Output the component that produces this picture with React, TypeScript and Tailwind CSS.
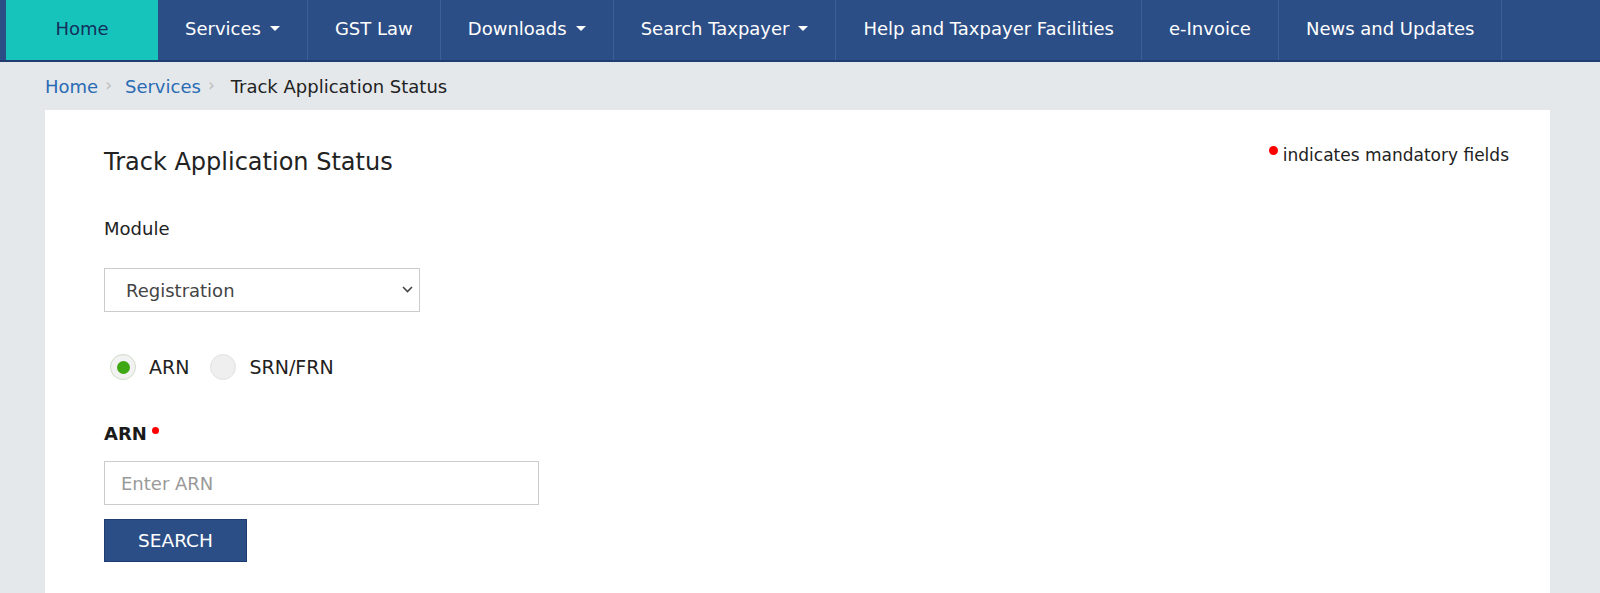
import { useState } from "react";

const navItems = [
  { label: "Services", caret: true },
  { label: "GST Law", caret: false },
  { label: "Downloads", caret: true },
  { label: "Search Taxpayer", caret: true },
  { label: "Help and Taxpayer Facilities", caret: false },
  { label: "e-Invoice", caret: false },
  { label: "News and Updates", caret: false },
];

function Caret() {
  return (
    <span className="ml-[9px] inline-block h-0 w-0 border-x-[5px] border-t-[5px] border-x-transparent border-t-white" />
  );
}

function Radio({ checked, label, onClick }: { checked: boolean; label: string; onClick: () => void }) {
  return (
    <label className="flex cursor-pointer items-center" onClick={onClick}>
      <span
        className={`flex h-[26px] w-[26px] items-center justify-center rounded-full border ${
          checked ? "border-[#cfdcc8] bg-[#f2f2f2]" : "border-[#e2e2e2] bg-[#efefef]"
        }`}
      >
        {checked && <span className="h-[13px] w-[13px] rounded-full bg-[#3fa713]" />}
      </span>
      <span className="ml-[13px] text-[19px] leading-[26px] text-[#222]">{label}</span>
    </label>
  );
}

export default function App() {
  const [mode, setMode] = useState<"arn" | "srn">("arn");

  return (
    <div className="min-h-[593px] bg-[#e4e8eb] font-['DejaVu_Sans',sans-serif] text-[#222]">
      <nav className="flex h-[62px] border-b-2 border-[#1f3d70] bg-[#2c4e86] pl-[6px]">
        <a className="flex w-[152px] items-center justify-center bg-[#17c4bb] pb-[3px] text-[18px] text-[#142f5c]">
          Home
        </a>
        {navItems.map((item) => (
          <a
            key={item.label}
            className="flex items-center border-r border-[#3e5f94] px-[27px] pb-[3px] text-[18px] text-white"
          >
            {item.label}
            {item.caret && <Caret />}
          </a>
        ))}
      </nav>

      <div className="flex h-[48px] items-center pl-[45px] text-[18px]">
        <a className="text-[#2a6bb3]">Home</a>
        <span className="mx-[7px] text-[17px] text-[#bdbdbd]">›</span>
        <a className="ml-[6px] text-[#2a6bb3]">Services</a>
        <span className="mx-[7px] text-[17px] text-[#bdbdbd]">›</span>
        <span className="ml-[9px] text-[#222]">Track Application Status</span>
      </div>

      <div className="ml-[45px] min-h-[483px] w-[1505px] bg-white pl-[59px] pr-[41px]">
        <div className="flex items-start justify-between pt-[32px]">
          <h1 className="mt-[4px] text-[24px] leading-[32px] font-normal text-[#222]">Track Application Status</h1>
          <p className="flex items-start text-[17px] leading-[26px] text-[#222]">
            <span className="mr-[5px] mt-[4px] h-[9px] w-[9px] rounded-full bg-[#ff0000]" />
            indicates mandatory fields
          </p>
        </div>

        <p className="mt-[38px] text-[18px] leading-[26px]">Module</p>

        <div className="relative mt-[26px] w-[316px]">
          <select className="h-[44px] w-full appearance-none border border-[#cccccc] bg-white pl-[21px] text-[18px] text-[#444] outline-none">
            <option>Registration</option>
          </select>
          <svg
            className="pointer-events-none absolute right-[7px] top-[18px]"
            width="11"
            height="7"
            viewBox="0 0 11 7"
            fill="none"
            stroke="#444"
            strokeWidth="1.6"
          >
            <path d="M1 1l4.5 4.5L10 1" />
          </svg>
        </div>

        <div className="mt-[42px] flex items-center pl-[6px]">
          <Radio checked={mode === "arn"} label="ARN" onClick={() => setMode("arn")} />
          <div className="ml-[21px]">
            <Radio checked={mode === "srn"} label="SRN/FRN" onClick={() => setMode("srn")} />
          </div>
        </div>

        <p className="mt-[41px] flex items-start text-[18px] leading-[26px] font-bold text-[#1a1a1a]">
          {mode === "arn" ? "ARN" : "SRN/FRN"}
          <span className="ml-[5px] mt-[6px] h-[7px] w-[7px] rounded-full bg-[#ff0000]" />
        </p>

        <input
          className="mt-[14px] block h-[44px] w-[435px] border border-[#cccccc] pl-[16px] text-[18px] text-[#333] outline-none placeholder:text-[#999]"
          placeholder={mode === "arn" ? "Enter ARN" : "Enter SRN/FRN"}
        />

        <button className="mt-[14px] block h-[43px] w-[143px] border border-[#1f3d70] bg-[#2c4e86] text-[18.5px] text-white">
          SEARCH
        </button>
      </div>
    </div>
  );
}
